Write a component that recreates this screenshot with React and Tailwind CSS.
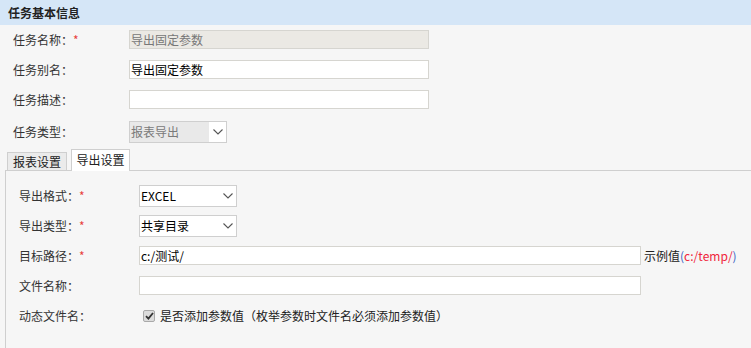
import React from "react";

const Chevron = () => (
  <svg width="10" height="6" viewBox="0 0 10 6" className="block">
    <path d="M0.5 0.5 L5 5 L9.5 0.5" fill="none" stroke="#555" strokeWidth="1.1" />
  </svg>
);

const Star = () => <span className="text-[#e8413c]">*</span>;

function Select({ value, disabled }) {
  if (disabled) {
    return (
      <div className="flex h-[22px] w-[98px] border border-[#cfcfcf] bg-[#e9e9e9]">
        <div className="flex flex-1 items-center pl-[1px] text-[#7a7a7a]">{value}</div>
        <div className="flex w-[17px] items-center justify-center bg-white">
          <Chevron />
        </div>
      </div>
    );
  }
  return (
    <div className="flex h-[22px] w-[98px] items-center justify-between border border-[#cfcfcf] bg-white pl-[1px] pr-[3px] text-black">
      <span>{value}</span>
      <Chevron />
    </div>
  );
}

export default function App() {
  return (
    <div
      className="h-[348px] w-[751px] overflow-hidden bg-[#f6f6f6] text-[12px] leading-none text-[#333]"
      style={{ fontFamily: '"Noto Sans CJK SC", "Noto Sans", sans-serif' }}
    >
      <div className="flex h-[25px] items-center bg-[#d5e6f7] pl-[8px] font-bold text-[#222]">
        任务基本信息
      </div>

      <div className="pl-[13px]">
        <div className="mt-[5px] flex h-[19px] items-center">
          <div className="w-[116px]">
            任务名称：<Star />
          </div>
          <div className="flex h-[19px] w-[300px] items-center border border-[#d6d5d0] bg-[#ebe9e4] pl-[1px] text-[#777]">
            导出固定参数
          </div>
        </div>
        <div className="mt-[11px] flex h-[19px] items-center">
          <div className="w-[116px]">任务别名：</div>
          <div className="flex h-[19px] w-[300px] items-center border border-[#d6d5d0] bg-white pl-[1px] text-black">
            导出固定参数
          </div>
        </div>
        <div className="mt-[11px] flex h-[19px] items-center">
          <div className="w-[116px]">任务描述：</div>
          <div className="h-[19px] w-[300px] border border-[#d6d5d0] bg-white" />
        </div>
        <div className="mt-[12px] flex h-[22px] items-center">
          <div className="w-[116px]">任务类型：</div>
          <Select value="报表导出" disabled />
        </div>
      </div>

      <div className="ml-[5px] mt-[6px]">
        <div className="relative z-10 flex items-end gap-[4px] pl-[2px]">
          <div className="flex h-[18px] w-[60px] items-center justify-center border border-b-0 border-[#cfcfcf] bg-[#ebebeb] text-[#222]">
            报表设置
          </div>
          <div className="-mb-px flex h-[22px] w-[59px] items-center justify-center border border-b-0 border-[#cfcfcf] bg-white pb-[1px] text-[#222]">
            导出设置
          </div>
        </div>
        <div className="h-[200px] border-l border-t border-[#cfcfcf] pl-[13px] pt-[14px]">
          <div className="flex h-[22px] items-center">
            <div className="w-[120px]">
              导出格式：<Star />
            </div>
            <Select value="EXCEL" />
          </div>
          <div className="mt-[8px] flex h-[22px] items-center">
            <div className="w-[120px]">
              导出类型：<Star />
            </div>
            <Select value="共享目录" />
          </div>
          <div className="mt-[9px] flex h-[19px] items-center">
            <div className="w-[120px]">
              目标路径：<Star />
            </div>
            <div className="flex h-[19px] w-[502px] items-center border border-[#d6d5d0] bg-white pl-[1px] text-black">
              c:/测试/
            </div>
            <div className="ml-[3px] text-[#222]">
              示例值<span className="text-[#3a63c4]">(</span>
              <span className="text-[#f0243c]">c:/temp/</span>
              <span className="text-[#3a63c4]">)</span>
            </div>
          </div>
          <div className="mt-[11px] flex h-[19px] items-center">
            <div className="w-[120px]">文件名称：</div>
            <div className="h-[19px] w-[502px] border border-[#d6d5d0] bg-white" />
          </div>
          <div className="mt-[14px] flex h-[14px] items-center">
            <div className="w-[120px]">动态文件名：</div>
            <div className="ml-[4px] flex h-[12px] w-[12px] items-center justify-center rounded-[2px] border border-[#a9a9a9] bg-[#dcdcdc]">
              <svg width="9" height="8" viewBox="0 0 9 8">
                <path d="M1 4.2 L3.4 6.6 L8 1" fill="none" stroke="#333" strokeWidth="1.8" />
              </svg>
            </div>
            <div className="ml-[5px] text-[#222]">是否添加参数值（枚举参数时文件名必须添加参数值）</div>
          </div>
        </div>
      </div>
    </div>
  );
}
